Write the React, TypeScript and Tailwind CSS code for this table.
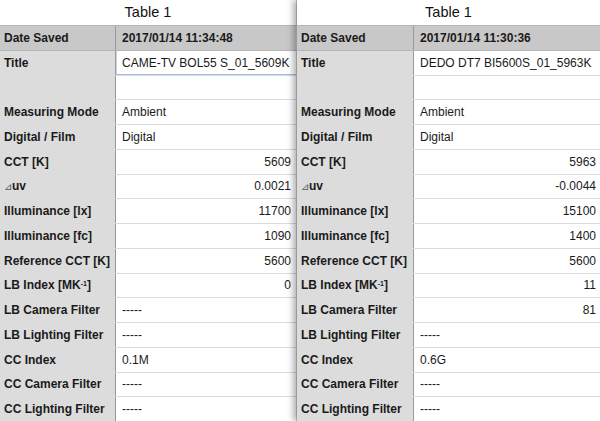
import React from "react";

type Row = { label: React.ReactNode; value: string; align?: "left" | "right"; selected?: boolean };

const sup = (
  <>
    LB Index [MK<sup className="text-[7px] relative -top-[1px]">-1</sup>]
  </>
);
const duv = (
  <>
    <span className="font-normal text-[10px] text-[#555]">⊿</span>uv
  </>
);

const left: Row[] = [
  { label: "Title", value: "CAME-TV BOL55 S_01_5609K", selected: true },
  { label: "", value: "" },
  { label: "Measuring Mode", value: "Ambient" },
  { label: "Digital / Film", value: "Digital" },
  { label: "CCT [K]", value: "5609", align: "right" },
  { label: duv, value: "0.0021", align: "right" },
  { label: "Illuminance [lx]", value: "11700", align: "right" },
  { label: "Illuminance [fc]", value: "1090", align: "right" },
  { label: "Reference CCT [K]", value: "5600", align: "right" },
  { label: sup, value: "0", align: "right" },
  { label: "LB Camera Filter", value: "-----" },
  { label: "LB Lighting Filter", value: "-----" },
  { label: "CC Index", value: "0.1M" },
  { label: "CC Camera Filter", value: "-----" },
  { label: "CC Lighting Filter", value: "-----" },
];

const right: Row[] = [
  { label: "Title", value: "DEDO DT7 BI5600S_01_5963K" },
  { label: "", value: "" },
  { label: "Measuring Mode", value: "Ambient" },
  { label: "Digital / Film", value: "Digital" },
  { label: "CCT [K]", value: "5963", align: "right" },
  { label: duv, value: "-0.0044", align: "right" },
  { label: "Illuminance [lx]", value: "15100", align: "right" },
  { label: "Illuminance [fc]", value: "1400", align: "right" },
  { label: "Reference CCT [K]", value: "5600", align: "right" },
  { label: sup, value: "11", align: "right" },
  { label: "LB Camera Filter", value: "81", align: "right" },
  { label: "LB Lighting Filter", value: "-----" },
  { label: "CC Index", value: "0.6G" },
  { label: "CC Camera Filter", value: "-----" },
  { label: "CC Lighting Filter", value: "-----" },
];

function Table({ date, rows, labelW, pr }: { date: string; rows: Row[]; labelW: string; pr: string }) {
  return (
    <div className="flex flex-col h-full">
      <div className="h-[25px] flex items-center justify-center text-[14.5px] text-[#111]">Table 1</div>
      <div className="flex flex-col flex-1">
        <div className="flex flex-1 bg-[#c8c8c8] border-t border-[#b5b5b5] border-b border-[#b0b0b0]">
          <div className={`${labelW} shrink-0 flex items-center pl-[4px] font-bold text-[12px] text-[#1a1a1a] border-r border-[#9a9a9a]`}>
            Date Saved
          </div>
          <div className="flex-1 flex items-center pl-[6px] font-bold text-[12px] text-[#1a1a1a]">{date}</div>
        </div>
        {rows.map((r, i) => (
          <div key={i} className="flex flex-1 border-b border-[#dadada] last:border-b-0">
            <div
              className={`${labelW} shrink-0 flex items-center pl-[4px] font-bold text-[12px] text-[#1a1a1a] bg-[#dcdcdc] border-r border-[#999999] whitespace-nowrap overflow-hidden`}
            >
              {r.label}
            </div>
            <div
              className={`flex-1 min-w-0 flex items-center text-[12px] text-[#1a1a1a] bg-white whitespace-nowrap overflow-hidden ${
                r.align === "right" ? `justify-end ${pr}` : "pl-[6px]"
              } ${r.selected ? "shadow-[inset_0_-1px_0_#9fc0ea,inset_1px_0_0_#c6d8f0]" : ""}`}
            >
              {r.value}
            </div>
          </div>
        ))}
      </div>
    </div>
  );
}

export default function App() {
  return (
    <div
      className="w-[600px] h-[421px] overflow-hidden bg-white flex"
      style={{ fontFamily: '"Liberation Sans", Arial, sans-serif' }}
    >
      <div className="w-[297px] shrink-0 h-full border-r border-[#d0d0d0]">
        <Table date="2017/01/14 11:34:48" rows={left} labelW="w-[116px]" pr="pr-[5px]" />
      </div>
      <div className="flex-1 min-w-0 h-full relative z-10 shadow-[-4px_0_6px_rgba(0,0,0,0.3)]">
        <Table date="2017/01/14 11:30:36" rows={right} labelW="w-[117px]" pr="pr-[4px]" />
      </div>
    </div>
  );
}
